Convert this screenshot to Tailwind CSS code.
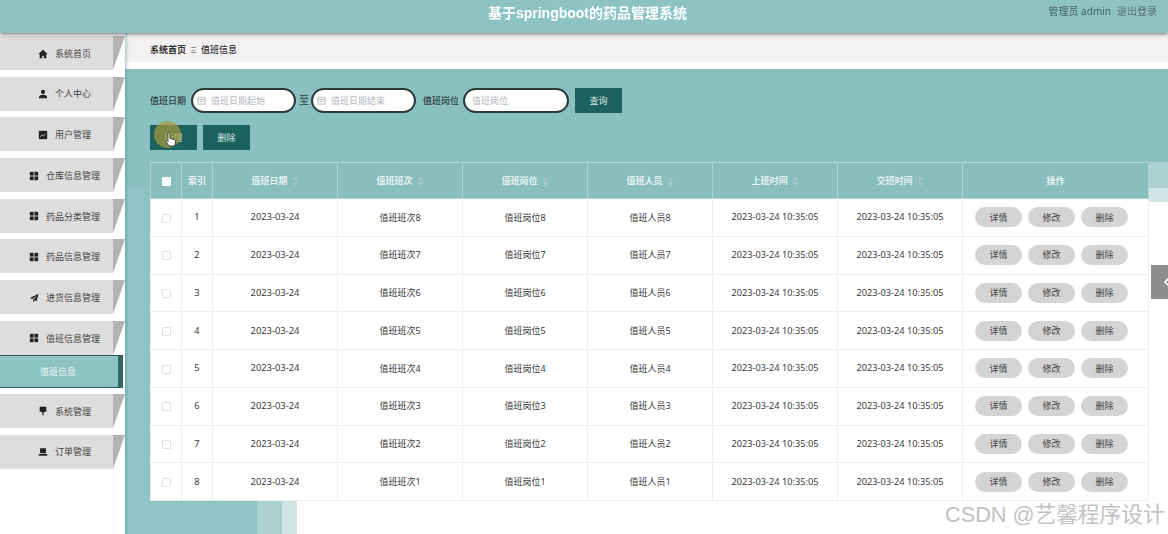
<!DOCTYPE html>
<html>
<head>
  <meta charset="UTF-8">
  <title>值班信息</title>
  <script src="https://cdn.jsdelivr.net/npm/@tailwindcss/browser@4"></script>
</head>
<body class="bg-white overflow-hidden font-['Noto_Sans','Noto_Sans_CJK_SC',sans-serif] text-[#333]">
  <div class="relative w-[1168px] h-[534px] overflow-hidden blur-[0.4px]">
    <header class="relative z-20 h-[33px] bg-[#8ec3c3] shadow-[0_2px_3px_rgba(60,60,60,0.55)] flex items-center justify-end">
      <h1 class="absolute left-[7px] right-0 top-[4px] text-center text-[14px] leading-[18px] font-bold text-white font-['Liberation_Sans','Noto_Sans_CJK_SC',sans-serif]">基于springboot的药品管理系统</h1>
      <div class="flex gap-[6px] pr-[11px] pb-[11px] text-[10px] leading-[14px] text-[#44605f]">
        <span>管理员 admin</span><span class="text-[#55706f]">退出登录</span>
      </div>
    </header>

    <div class="flex h-[501px]">
      <aside id="menu" class="w-[125px] shrink-0 pt-[3px] flex flex-col bg-white"></aside>

      <main class="relative flex-1 bg-white">
        <!-- background picture of the page -->
        <div class="absolute left-0 right-0 top-[36px] h-[93px] bg-[#89c0c0]"></div>
        <div class="absolute left-0 top-[129px] bottom-0 w-[132px] bg-[#8ec4c5]"></div>
        <div class="absolute left-[132px] top-[129px] bottom-0 w-[25px] bg-[#abd0d0]"></div>
        <div class="absolute left-[157px] top-[129px] bottom-0 w-[15px] bg-[#d0e4e4]"></div>
        <div class="absolute left-[172px] top-[129px] right-0 h-[26px] bg-[#aed2d2]"></div>
        <div class="absolute left-[1000px] right-0 top-[155px] h-[14px] bg-[#d0e4e4]"></div>
        <div class="absolute left-0 w-[132px] top-[129px] h-[26px] bg-[#89c0c0]"></div>

        <div class="relative">
          <div class="h-[27px] mt-[3px] bg-[#f3f1f2] border-b border-white pl-[25px] pt-[2px] flex items-center text-[9px] font-semibold text-[#333]">
            <span>系统首页</span><span class="mx-[4.500px] font-normal text-[6px]">三</span><span class="font-medium">值班信息</span>
          </div>

          <div class="pt-[25px] pl-[25px]">
            <form class="flex items-center h-[25px] text-[9px] text-[#2f3f40]">
              <label class="mr-[5px] font-medium">值班日期</label>
              <div class="w-[105px] h-[25px] rounded-full bg-white border-2 border-[#2b3a3c] flex items-center pl-[4px] text-[#b4b8bd]">
                <svg class="w-[9px] h-[9px] mr-[5px]" viewBox="0 0 10 10" fill="none" stroke="#b4b8bd"><rect x="1" y="1.500" width="8" height="7.500"/><path d="M1 4h8M3 6h4"/></svg>
                <span>值班日期起始</span>
              </div>
              <span class="ml-[3px] mr-[2px] text-[10px]">至</span>
              <div class="w-[105px] h-[25px] rounded-full bg-white border-2 border-[#2b3a3c] flex items-center pl-[4px] text-[#b4b8bd]">
                <svg class="w-[9px] h-[9px] mr-[5px]" viewBox="0 0 10 10" fill="none" stroke="#b4b8bd"><rect x="1" y="1.500" width="8" height="7.500"/><path d="M1 4h8M3 6h4"/></svg>
                <span>值班日期结束</span>
              </div>
              <label class="ml-[7px] mr-[4px] font-medium">值班岗位</label>
              <div class="w-[106px] h-[25px] rounded-full bg-white border-2 border-[#2b3a3c] flex items-center pl-[7px] text-[#b4b8bd]">值班岗位</div>
              <button type="button" class="ml-[6px] w-[47px] h-[25px] bg-[#1c625f] text-[#d5e5e4]">查询</button>
            </form>

            <div class="flex gap-[6px] mt-[12px] text-[9px] text-[#d5e5e4]">
              <button class="w-[47px] h-[25px] bg-[#1c625f]">新增</button>
              <button class="w-[47px] h-[25px] bg-[#1c625f]">删除</button>
            </div>

            <table class="mt-[12px] w-[998px] table-fixed border-collapse bg-white text-[9.200px]">
              <colgroup>
                <col class="w-[31px]"><col class="w-[31px]"><col class="w-[125px]"><col class="w-[125px]"><col class="w-[125px]"><col class="w-[125px]"><col class="w-[125px]"><col class="w-[125px]"><col class="w-[186px]">
              </colgroup>
              <thead class="bg-[#88bfbe] text-[#e6f1f1] text-[9px]">
                <tr id="head" class="h-[36px]"></tr>
              </thead>
              <tbody id="rows" class="text-[#3a3a3a]"></tbody>
            </table>
          </div>
        </div>
        <div class="absolute left-0 top-0 bottom-0 w-[4px] bg-gradient-to-r from-[#5f8a8a]/40 to-transparent"></div>
      </main>
    </div>

    <div class="absolute left-[1151px] top-[265px] w-[17px] h-[34px] bg-[#8d8d8d] overflow-hidden flex items-center pl-[13px]">
      <svg class="w-[7px] h-[12px] shrink-0" viewBox="0 0 7 12" fill="none" stroke="#fff" stroke-width="1.600"><path d="M6 1 1 6l5 5"/></svg>
    </div>

    <!-- mouse highlight from the recording -->
    <div class="absolute left-[154px] top-[121px] w-[27px] h-[27px] rounded-full bg-[#a89a3a]/70"></div>
    <svg class="absolute left-[165px] top-[132px] w-[11px] h-[16px]" viewBox="0 0 11 16"><path d="M3 1.500c0-1 2-1 2 0v5l4 1c1 .3 1.500 1 1.400 2l-.6 4.500H4L1 9.500c-.6-1 .8-2 1.500-1L3 9.500z" fill="#fff" stroke="#222" stroke-width=".8"/></svg>

    <div class="absolute left-[945px] top-[501px] text-[21.700px] leading-[28px] whitespace-nowrap text-[#c2c2c2] font-['Liberation_Sans','Noto_Sans_CJK_SC',sans-serif]">CSDN @艺馨程序设计</div>
  </div>

  <script>
    const icons = {
      home: '<path d="M6 1 .5 6H2v5h3V8h2v3h3V6h1.500z"/>',
      user: '<circle cx="6" cy="3.500" r="2.500"/><path d="M1 11c0-3 2-4 5-4s5 1 5 4z"/>',
      chart: '<path d="M1 1h10v10H1z"/><path d="M3 8l2-2 1.500 1L9 4.500" fill="none" stroke="#ddd"/>',
      grid: '<rect x="1" y="1" width="4.500" height="4.500"/><rect x="6.500" y="1" width="4.500" height="4.500"/><rect x="1" y="6.500" width="4.500" height="4.500"/><rect x="6.500" y="6.500" width="4.500" height="4.500"/>',
      send: '<path d="M11.500 1 1 6l3 1.200L10 3 5 8v3l1.800-2.300L9 10z"/>',
      monitor: '<path d="M2 1h8v6H8L6.700 8v3H5.300V8L4 7H2z"/>',
      printer: '<path d="M2.500 1.500h7v6h-7zM1 8.300h10v2.200H1z"/>'
    };
    const menu = [
      ['系统首页', 'home', 38], ['个人中心', 'user', 38], ['用户管理', 'chart', 38],
      ['仓库信息管理', 'grid', 29], ['药品分类管理', 'grid', 29], ['药品信息管理', 'grid', 29],
      ['进货信息管理', 'send', 29], ['值班信息管理', 'grid', 29], null,
      ['系统管理', 'monitor', 38], ['订单管理', 'printer', 38]
    ];
    document.getElementById('menu').innerHTML = menu.map(m => {
      if (!m) return '<div class="h-[33px] -mt-[6.700px] mb-[6px] w-[123px] bg-[#8cc3c3] border-y border-[#2b5a5a] border-r-[5px] border-r-[#2d6663] flex items-center pl-[40px] text-[9px] text-[#eef6f6]">值班信息</div>';
      return `<div class="flex h-[34px] mb-[6.700px] w-[125px]">
        <div class="w-[113px] bg-[#dedddd] flex items-center pt-[1px] text-[9px] text-[#444]" style="padding-left:${m[2]}px">
          <svg class="w-[10px] h-[10px] mr-[7px] shrink-0" viewBox="0 0 12 12" fill="#222">${icons[m[1]]}</svg><span>${m[0]}</span>
        </div>
        <svg class="w-[12px] h-[34px]" viewBox="0 0 12 34"><path d="M0 0h12L0 34z" fill="#b5b3b1"/></svg>
      </div>`;
    }).join('');

    const sort = '<svg class="inline-block w-[5px] h-[9px] ml-[5px] mr-[1px]" viewBox="0 0 5 9" fill="#a9c9ca"><path d="M2.500 0 5 3.500H0zM2.500 9 0 5.500h5z"/></svg>';
    const headCell = 'border border-[#add2d2] font-semibold text-center p-0';
    document.getElementById('head').innerHTML =
      `<th class="${headCell}"><span class="inline-block w-[9px] h-[9px] bg-white rounded-[1px] align-middle"></span></th>` +
      `<th class="${headCell}">索引</th>` +
      ['值班日期', '值班班次', '值班岗位', '值班人员', '上班时间', '交班时间'].map(t => `<th class="${headCell}">${t}${sort}</th>`).join('') +
      `<th class="${headCell}">操作</th>`;

    const cell = 'border border-[#eeeeee] text-center p-0';
    const pill = 'w-[47px] h-[20px] rounded-full bg-[#d4d4d4] text-[9px] text-[#444]';
    let rows = '';
    for (let i = 1; i <= 8; i++) {
      const n = 9 - i;
      rows += `<tr class="h-[37.750px]">
        <td class="${cell}"><span class="inline-block w-[9px] h-[9px] border border-[#dcdfe6] rounded-[1px] align-middle"></span></td>
        <td class="${cell}">${i}</td>
        <td class="${cell} text-[9.400px]">2023-03-24</td>
        <td class="${cell} text-[9px]">值班班次${n}</td>
        <td class="${cell} text-[9px]">值班岗位${n}</td>
        <td class="${cell} text-[9px]">值班人员${n}</td>
        <td class="${cell}">2023-03-24 10:35:05</td>
        <td class="${cell}">2023-03-24 10:35:05</td>
        <td class="${cell}"><div class="flex justify-center gap-[6px] pr-[8px]"><button class="${pill}">详情</button><button class="${pill}">修改</button><button class="${pill}">删除</button></div></td>
      </tr>`;
    }
    document.getElementById('rows').innerHTML = rows;
  </script>
</body>
</html>
